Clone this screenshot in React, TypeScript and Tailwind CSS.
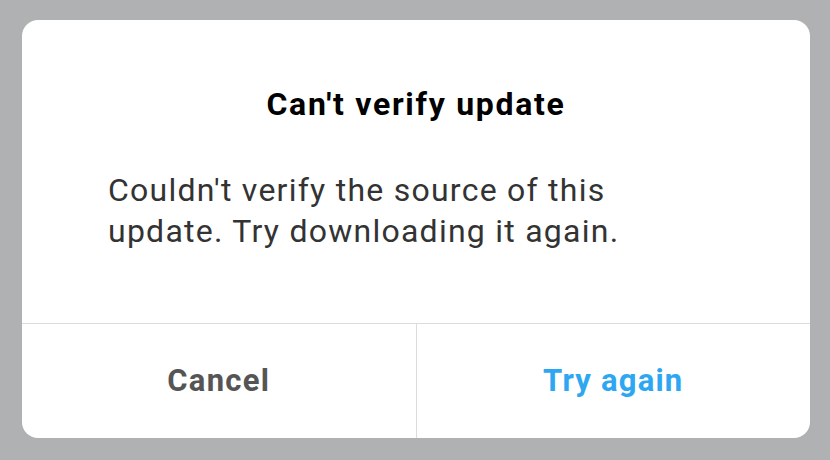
export default function App() {
  return (
    <div className="h-[460px] w-[830px] bg-[#b0b1b3] pl-[22px] pr-[20px] pt-[20px] pb-[22px]" style={{ fontFamily: "Roboto, 'Noto Sans', sans-serif" }}>
      <div className="flex h-full flex-col overflow-hidden rounded-[16px] bg-white">
        <div className="flex h-[303px] flex-col">
          <h1 className="mt-[66px] text-center text-[32px] font-bold leading-[36px] tracking-[1.7px] text-black">Can't verify update</h1>
          <p className="mt-[48px] pl-[86px] pr-[20px] text-[32px] leading-[41px] tracking-[1.25px] text-[#333333]">
            Couldn't verify the source of this
            <br />
            update. Try downloading it again.
          </p>
        </div>
        <div className="flex flex-1 border-t border-[#dcdcdc]">
          <button type="button" className="flex flex-1 items-center justify-center border-r border-[#dcdcdc] text-[31px] font-bold tracking-[1.3px] text-[#555555]">
            Cancel
          </button>
          <button type="button" className="flex flex-1 items-center justify-center text-[31px] font-bold tracking-[1.2px] text-[#2ea7f2]">
            Try again
          </button>
        </div>
      </div>
    </div>
  );
}
